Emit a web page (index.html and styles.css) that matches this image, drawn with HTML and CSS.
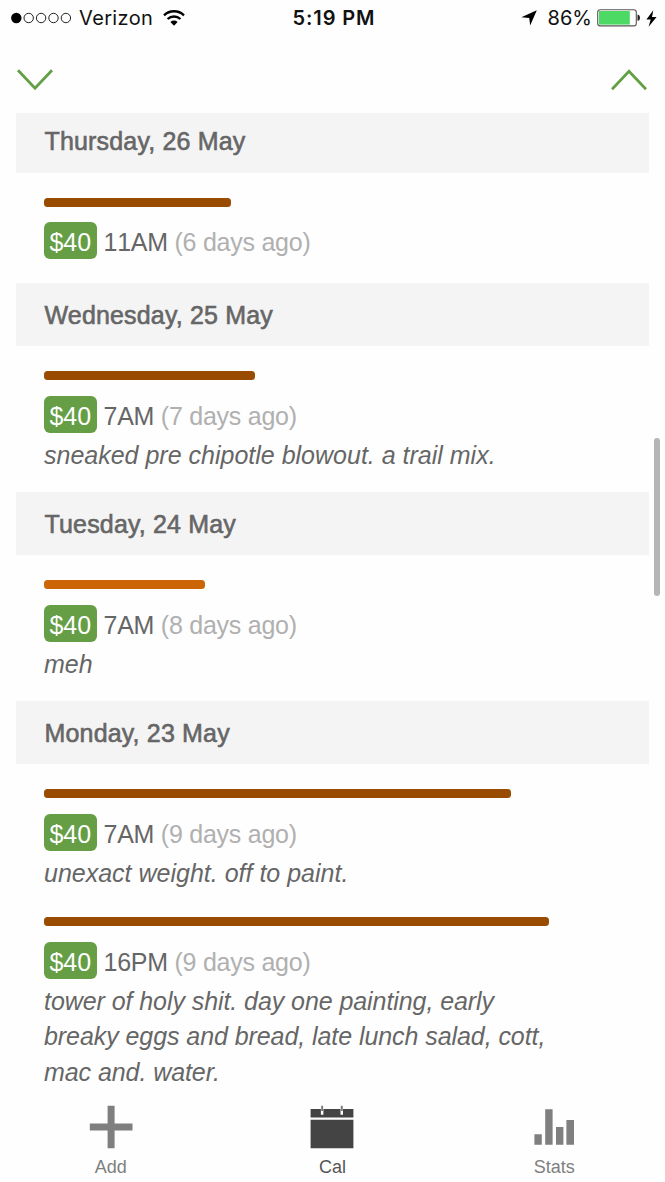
FILE: index.html
```html
<!DOCTYPE html>
<html lang="en">
<head>
<meta charset="utf-8">
<title>Calendar</title>
<link rel="stylesheet" href="styles.css">
</head>
<body>
<div class="app">
  <header class="status">
    <div class="status-side">
      <svg class="signal" width="61" height="12" viewBox="0 0 61 12"><circle cx="5.3" cy="6" r="5.2"/><g fill="none" stroke="#222" stroke-width="1"><circle cx="17.7" cy="6" r="4.7"/><circle cx="30.1" cy="6" r="4.7"/><circle cx="42.5" cy="6" r="4.7"/><circle cx="54.9" cy="6" r="4.7"/></g></svg>
      <span class="carrier">Verizon</span>
      <svg class="wifi" width="22" height="16" viewBox="0 0 22 16"><g fill="none" stroke="#000" stroke-width="2.4"><path d="M1 5.3a14.5 14.5 0 0 1 20 0"/><path d="M4.6 9a9.3 9.3 0 0 1 12.8 0"/></g><path d="M11 15.8 7.4 12a5.3 5.3 0 0 1 7.2 0z"/></svg>
    </div>
    <div class="clock">5:19 PM</div>
    <div class="status-side status-right">
      <svg class="locate" width="16" height="16" viewBox="0 0 16 16"><path d="M15.8.2 9.2 15.6 8.2 8.1.4 7.2z"/></svg>
      <span class="percent">86%</span>
      <svg class="battery" width="43" height="18" viewBox="0 0 43 18"><rect x=".7" y=".7" width="38.6" height="16.2" rx="2.5" fill="#fff" stroke="#555" stroke-width="1.1"/><path d="M2 2h30.8v13.6H2z" fill="#4cd964"/><path d="M40.5 5.8h.8q1.7.6 1.7 3t-1.7 3h-.8z" fill="#222"/></svg>
      <svg class="bolt" width="11" height="17" viewBox="0 0 11 17"><path d="M7.3.3.4 9.5h4.3L2.6 16.7 10.6 7H6z"/></svg>
    </div>
  </header>
  <nav class="pager">
    <svg width="36" height="22" viewBox="0 0 36 22"><path d="m1 1.3 17 17.9L35 1.3"/></svg>
    <svg width="36" height="22" viewBox="0 0 36 22"><path d="M1 20.2 18 2.2l17 18"/></svg>
  </nav>
  <main class="days">
    <section>
      <h2 class="day first">Thursday, 26 May</h2>
      <article class="entry bare">
        <div class="bar" style="width:186.5px"></div>
        <div class="meta"><span class="badge">$40</span><span class="time">11AM <span class="ago">(6 days ago)</span></span></div>
      </article>
    </section>
    <section>
      <h2 class="day">Wednesday, 25 May</h2>
      <article class="entry">
        <div class="bar" style="width:210.5px"></div>
        <div class="meta"><span class="badge">$40</span><span class="time">7AM <span class="ago">(7 days ago)</span></span></div>
        <p class="note">sneaked pre chipotle blowout. a trail mix.</p>
      </article>
    </section>
    <section>
      <h2 class="day">Tuesday, 24 May</h2>
      <article class="entry">
        <div class="bar light" style="width:161px"></div>
        <div class="meta"><span class="badge">$40</span><span class="time">7AM <span class="ago">(8 days ago)</span></span></div>
        <p class="note">meh</p>
      </article>
    </section>
    <section>
      <h2 class="day">Monday, 23 May</h2>
      <article class="entry">
        <div class="bar" style="width:466.5px"></div>
        <div class="meta"><span class="badge">$40</span><span class="time">7AM <span class="ago">(9 days ago)</span></span></div>
        <p class="note">unexact weight. off to paint.</p>
      </article>
      <article class="entry next">
        <div class="bar" style="width:504.5px"></div>
        <div class="meta"><span class="badge">$40</span><span class="time">16PM <span class="ago">(9 days ago)</span></span></div>
        <p class="note long">tower of holy shit. day one painting, early<br>breaky eggs and bread, late lunch salad, cott,<br>mac and. water.</p>
      </article>
    </section>
  </main>
  <nav class="tabs">
    <div class="tab">
      <svg width="44" height="44" viewBox="0 0 44 44"><path d="M18.6.8h7v17.8H43.5v7H25.6V43.3h-7V25.6H.8v-7h17.8z"/></svg>
      <span>Add</span>
    </div>
    <div class="tab active">
      <svg width="44" height="44" viewBox="0 0 44 44"><path d="M.6 4h42.8v8.6H.6zM.6 14.8h42.8V43.3H.6z"/><path d="M10.9 4h2.5v5.8h-2.5zM30.5 4H33v5.8h-2.5z" fill="#fff"/><path d="M11.2.7h1.9V6h-1.9zM30.8.7h1.9V6h-1.9z" fill="#777"/></svg>
      <span>Cal</span>
    </div>
    <div class="tab">
      <svg width="44" height="44" viewBox="0 0 44 44"><path d="M2.4 29.2h7.4v10.6H2.4zM13.2 4.2h7.4v35.6h-7.4zM24 22h7.4v17.8H24zM34.4 15H42v24.8h-7.6z"/></svg>
      <span>Stats</span>
    </div>
  </nav>
  <div class="scrollbar"></div>
</div>
</body>
</html>
```
FILE: styles.css
```css
* { box-sizing: border-box; }
body { margin: 0; background: #fff; }
svg { display: block; flex: none; }
.app {
  position: relative;
  width: 665px;
  height: 1182px;
  overflow: hidden;
  background: #fefefe;
  color: #666;
  font-family: "Liberation Sans", Arial, sans-serif;
}
.status {
  display: grid;
  grid-template-columns: 1fr auto 1fr;
  align-items: center;
  height: 36px;
  padding: 0 8px 0 11px;
  color: #111;
  font: 20px/36px Inter, sans-serif;
}
.status-side { display: flex; align-items: center; }
.status-right { justify-content: flex-end; }
.carrier { margin-left: 7px; letter-spacing: .35px; }
.wifi { margin-left: 10px; }
.clock { font-weight: 600; letter-spacing: .9px; }
.locate { margin-right: 11px; }
.battery { margin-left: 5px; }
.bolt { margin-left: 6px; }
.pager {
  display: flex;
  justify-content: space-between;
  height: 77px;
  padding: 33px 18px 0 17.4px;
}
.pager path { fill: none; stroke: #629f45; stroke-width: 2.8; }
.days { padding: 0 16.5px 0 16px; }
.day {
  height: 63.5px;
  margin: 0;
  padding-left: 28.5px;
  background: #f4f4f4;
  font-size: 25px;
  font-weight: 400;
  line-height: 64px;
  letter-spacing: .17px;
  -webkit-text-stroke: .6px #666;
}
.day.first { height: 60px; line-height: 57px; }
.entry { padding: 25px 0 18.4px 28px; }
.entry.bare { padding: 24.5px 0 23.5px 28px; }
.entry.next { padding-top: 7.1px; }
.bar { height: 9px; border-radius: 3.5px; background: #994c00; }
.bar.light { background: #cc6506; }
.meta { display: flex; align-items: center; margin-top: 15.8px; height: 37px; }
.badge {
  width: 52.5px;
  height: 37px;
  border-radius: 6px;
  background: #659e44;
  color: #fff;
  font-size: 25px;
  line-height: 40px;
  text-align: center;
}
.time {
  margin-left: 7px;
  font-size: 25px;
  line-height: 40px;
  letter-spacing: -.25px;
  font-kerning: none;
  padding-top: 3px;
}
.ago { color: #b0b0b0; }
.note {
  margin: 5px 0 0;
  font-size: 25px;
  font-style: italic;
  line-height: 35.4px;
}
.note.long { letter-spacing: -.07px; }
.tabs {
  position: absolute;
  left: 0;
  right: 0;
  bottom: 0;
  height: 92px;
  padding-top: 15px;
  display: grid;
  grid-template-columns: repeat(3, 1fr);
  background: #fefefe;
}
.tab {
  display: flex;
  flex-direction: column;
  align-items: center;
  gap: 8px;
  color: #7f7f7f;
  fill: #7f7f7f;
  font-size: 18px;
  line-height: 20px;
}
.tab.active { color: #555; fill: #444; }
.scrollbar {
  position: absolute;
  left: 653.5px;
  top: 437.5px;
  width: 6px;
  height: 158px;
  border-radius: 3px;
  background: #b5b5b5;
}
```
